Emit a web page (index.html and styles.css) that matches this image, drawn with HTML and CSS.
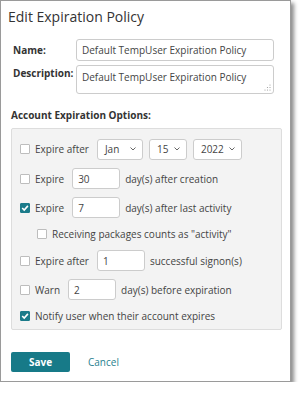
FILE: index.html
```html
<!DOCTYPE html>
<html lang="en">
<head>
    <meta charset="UTF-8">
    <meta name="viewport" content="width=device-width, initial-scale=1.0">
    <title>Edit Expiration Policy</title>
    <link rel="stylesheet" href="styles.css">
</head>
<body>
<div class="dialog">
    <h1 class="dialog-title">Edit Expiration Policy</h1>

    <div class="field-row">
        <label class="field-label">Name:</label>
        <input class="text-input" type="text" value="Default TempUser Expiration Policy">
    </div>
    <div class="field-row field-row-top">
        <label class="field-label">Description:</label>
        <div class="textarea-wrap">
            <textarea class="text-area">Default TempUser Expiration Policy</textarea>
            <svg class="grip" width="7" height="7" viewBox="0 0 7 7">
                <circle cx="6" cy="1" r="0.6"/>
                <circle cx="6" cy="3.5" r="0.6"/>
                <circle cx="3.5" cy="3.5" r="0.6"/>
                <circle cx="6" cy="6" r="0.6"/>
                <circle cx="3.5" cy="6" r="0.6"/>
                <circle cx="1" cy="6" r="0.6"/>
            </svg>
        </div>
    </div>

    <h2 class="section-title">Account Expiration Options:</h2>
    <div class="options-panel">
        <div class="option-row">
            <span class="check"></span>
            <span class="option-text">Expire after</span>
            <div class="select select-month"><span>Jan</span><svg width="6" height="4" viewBox="0 0 6 4"><polyline points="0.5,0.5 3,3 5.5,0.5"/></svg></div>
            <div class="select select-day"><span>15</span><svg width="6" height="4" viewBox="0 0 6 4"><polyline points="0.5,0.5 3,3 5.5,0.5"/></svg></div>
            <div class="select select-year"><span>2022</span><svg width="6" height="4" viewBox="0 0 6 4"><polyline points="0.5,0.5 3,3 5.5,0.5"/></svg></div>
        </div>
        <div class="option-row">
            <span class="check"></span>
            <span class="option-text">Expire</span>
            <input class="num-input" type="text" value="30">
            <span class="option-after">day(s) after creation</span>
        </div>
        <div class="option-row">
            <span class="check checked"><svg width="10" height="10" viewBox="0 0 10 10"><polyline points="2.2,5 4.2,7 7.9,2.9"/></svg></span>
            <span class="option-text">Expire</span>
            <input class="num-input" type="text" value="7">
            <span class="option-after">day(s) after last activity</span>
        </div>
        <div class="option-row option-row-small option-row-sub">
            <span class="check"></span>
            <span class="option-text">Receiving packages counts as "activity"</span>
        </div>
        <div class="option-row">
            <span class="check"></span>
            <span class="option-text">Expire after</span>
            <input class="num-input" type="text" value="1">
            <span class="option-after">successful signon(s)</span>
        </div>
        <div class="option-row">
            <span class="check"></span>
            <span class="option-text">Warn</span>
            <input class="num-input" type="text" value="2">
            <span class="option-after">day(s) before expiration</span>
        </div>
        <div class="option-row option-row-small">
            <span class="check checked"><svg width="10" height="10" viewBox="0 0 10 10"><polyline points="2.2,5 4.2,7 7.9,2.9"/></svg></span>
            <span class="option-text">Notify user when their account expires</span>
        </div>
    </div>

    <div class="actions">
        <button class="btn-save">Save</button>
        <a class="btn-cancel" href="#">Cancel</a>
    </div>
</div>
</body>
</html>
```

FILE: styles.css
```css
body {
    font-family: 'Open Sans', 'Liberation Sans', sans-serif;
    font-size: 10px;
    color: #444;
    background-color: #ffffff;
    margin: 0;
    padding: 0;
}
.dialog {
    box-sizing: border-box;
    width: 291px;
    height: 382px;
    padding: 6px 8px 0 10px;
    background-color: #ffffff;
    border: 1px solid #9a9a9a;
    box-shadow: 3px 3px 4px rgba(0, 0, 0, 0.45);
}
.dialog-title {
    margin: 0 0 12px -3px;
    font-size: 14px;
    font-weight: normal;
    line-height: 20px;
    color: #333;
}
.field-row {
    display: flex;
    align-items: center;
    margin-bottom: 4px;
}
.field-row-top {
    align-items: flex-start;
}
.field-label {
    width: 63px;
    padding-left: 2px;
    font-weight: bold;
    color: #333;
}
.field-row-top .field-label {
    padding-top: 1px;
}
.text-input,
.text-area,
.num-input {
    box-sizing: border-box;
    font-family: inherit;
    font-size: 10px;
    color: #444;
    border: 1px solid #cccccc;
    border-radius: 3px;
    background-color: #fff;
    outline: none;
}
.text-input {
    width: 198px;
    height: 22px;
    padding: 0 5px;
}
.textarea-wrap {
    position: relative;
    width: 198px;
    height: 29px;
}
.text-area {
    display: block;
    width: 100%;
    height: 100%;
    padding: 4px 5px;
    resize: none;
    line-height: 14px;
}
.grip {
    position: absolute;
    right: 3px;
    bottom: 3px;
    fill: #999;
}
.section-title {
    margin: 14px 0 6px 0;
    font-size: 10px;
    font-weight: bold;
    line-height: 14px;
    color: #333;
}
.options-panel {
    box-sizing: border-box;
    width: 271px;
    height: 202px;
    padding: 9px 8px 0 8px;
    background-color: #f3f3f3;
    border: 1px solid #dddddd;
    border-radius: 2px;
}
.option-row {
    display: flex;
    align-items: center;
    height: 21px;
    margin-bottom: 8px;
}
.option-row:first-child {
    height: 22px;
}
.option-row-small {
    height: 16px;
}
.option-row-sub {
    padding-left: 17px;
}
.check {
    box-sizing: border-box;
    display: flex;
    align-items: center;
    justify-content: center;
    width: 10px;
    height: 10px;
    margin-right: 5px;
    border: 1px solid #bdbdbd;
    border-radius: 1px;
    background-color: #fff;
}
.check.checked {
    border-color: #1b7b8a;
    background-color: #1b7b8a;
}
.check svg {
    flex: none;
    fill: none;
    stroke: #fff;
    stroke-width: 1.6;
}
.option-text {
    margin-right: 8px;
    white-space: nowrap;
}
.select {
    box-sizing: border-box;
    display: flex;
    align-items: center;
    justify-content: space-between;
    height: 21px;
    margin-right: 6px;
    padding: 0 6px 0 7px;
    border: 1px solid #cccccc;
    border-radius: 3px;
    background-color: #fff;
}
.select svg {
    fill: none;
    stroke: #666;
    stroke-width: 1;
}
.select-month {
    width: 46px;
}
.select-day {
    width: 38px;
}
.select-year {
    width: 49px;
}
.num-input {
    width: 48px;
    height: 21px;
    padding: 0 5px;
    margin-right: 5px;
}
.option-after {
    white-space: nowrap;
}
.actions {
    display: flex;
    align-items: center;
    margin-top: 22px;
}
.btn-save {
    width: 59px;
    height: 20px;
    padding: 0;
    font-family: inherit;
    font-size: 10px;
    font-weight: bold;
    color: #fff;
    background-color: #177a88;
    border: none;
    border-radius: 2px;
}
.btn-cancel {
    margin-left: 18px;
    font-size: 10px;
    color: #1f7f8f;
    text-decoration: none;
}
```
